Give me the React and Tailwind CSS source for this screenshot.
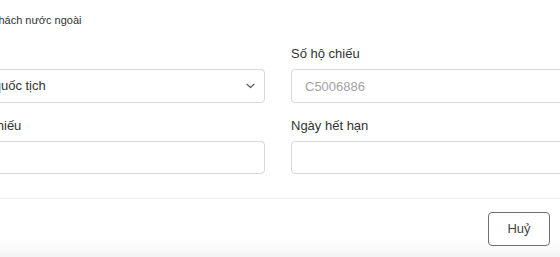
const Field = ({ label, children }) => (
  <div className="flex flex-col">
    <label className="text-[13px] leading-4 text-[#333333] mb-[7px] whitespace-nowrap">
      {label}
    </label>
    {children}
  </div>
);

const ChevronDown = () => (
  <svg width="9" height="6" viewBox="0 0 9 6" fill="none">
    <path
      d="M1 1.2l3.5 3.3 3.5-3.3"
      stroke="#5f5f66"
      strokeWidth="1.2"
      strokeLinecap="round"
      strokeLinejoin="round"
    />
  </svg>
);

const App = () => {
  return (
    <div
      className="w-[560px] h-[257px] overflow-hidden bg-white flex flex-col"
      style={{ fontFamily: '"Liberation Sans", Arial, sans-serif' }}
    >
      <div className="ml-[-56px] w-[668px] shrink-0">
        <h3 className="text-[11px] leading-[14px] text-[#333333] pt-[13px] whitespace-nowrap">
          Thông tin khách nước ngoài
        </h3>

        <div className="grid grid-cols-2 gap-x-[26px] gap-y-[15px] mt-[19px]">
          <Field label="Quốc tịch">
            <div className="h-[34px] border border-[#d6d6dc] rounded-[4px] flex items-center justify-between pl-[14px] pr-[9px]">
              <span className="text-[13px] text-[#333333]">Chọn quốc tịch</span>
              <ChevronDown />
            </div>
          </Field>

          <Field label="Số hộ chiếu">
            <input
              className="h-[34px] border border-[#d6d6dc] rounded-[4px] px-[13px] text-[13px] text-[#333333] placeholder:text-[#a3a3a3] outline-none"
              placeholder="C5006886"
            />
          </Field>

          <Field label="Loại hộ chiếu">
            <input className="h-[33px] border border-[#d6d6dc] rounded-[4px] px-[13px] text-[13px] outline-none" />
          </Field>

          <Field label="Ngày hết hạn">
            <input className="h-[33px] border border-[#d6d6dc] rounded-[4px] px-[13px] text-[13px] outline-none" />
          </Field>
        </div>
      </div>

      <div className="mt-[24px] flex-1 border-t border-[#eeeeee] bg-linear-to-b from-white from-70% to-[#f3f3f3] flex justify-end items-start pt-[13px] pr-[10px]">
        <button className="w-[62px] h-[34px] border border-[#6e6e6e] rounded-[4px] bg-white text-[13px] text-[#444444]">
          Huỷ
        </button>
      </div>
    </div>
  );
};

export default App;
